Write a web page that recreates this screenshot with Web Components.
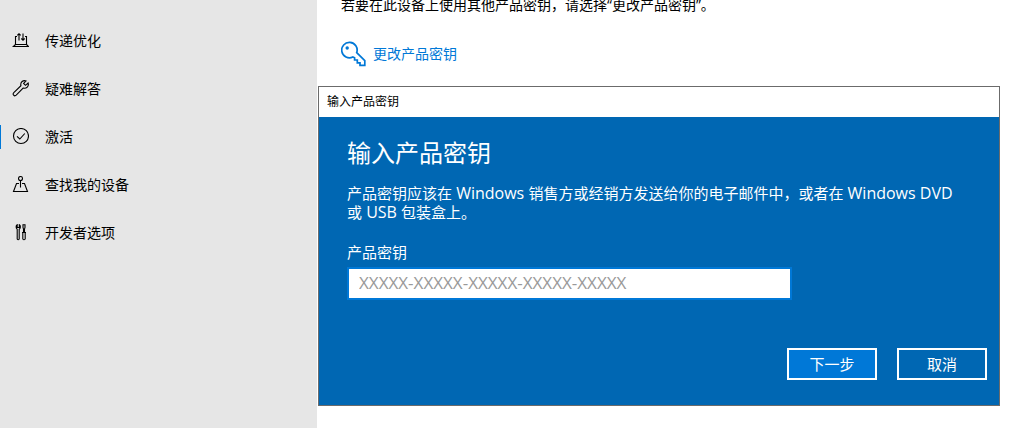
<!DOCTYPE html>
<html lang="zh-CN">
<head>
<meta charset="utf-8">
<title>激活</title>
<style>
body { margin: 0; background: #fff; color: #000; font-family: "Open Sans", "Noto Sans CJK SC", sans-serif; font-size: 14px; }
</style>
</head>
<body>
<settings-page></settings-page>
<script>
const define = (name, html, setup) => customElements.define(name, class extends HTMLElement {
  connectedCallback() {
    if (this.shadowRoot) return;
    const t = document.createElement('template');
    t.innerHTML = html;
    this.attachShadow({ mode: 'open' }).append(t.content.cloneNode(true));
    if (setup) setup(this, this.shadowRoot);
  }
});

define('nav-item', `
<style>
:host { display: block; }
a { display: flex; align-items: center; gap: 16px; height: 48px; padding-left: 12px; position: relative; color: #000; text-decoration: none; line-height: 20px; }
:host([current]) a::before { content: ""; position: absolute; left: 0; top: 12px; width: 1px; height: 24px; background: #0078d7; }
::slotted(svg) { width: 17px; height: 18px; flex: none; }
</style>
<a href="#"><slot name="icon"></slot><slot></slot></a>`,
(host, root) => { if (host.hasAttribute('current')) root.querySelector('a').setAttribute('aria-current', 'page'); });

define('side-nav', `
<style>
:host { display: block; background: #e6e6e6; }
nav { padding-top: 17px; }
svg { fill: none; stroke: #000; stroke-width: 1.1; }
</style>
<nav>
<nav-item><svg slot="icon" viewBox="0 0 17 18"><path d="M5 4.500H3.500V12.500H14.500V4.500H13M3.500 12.500L1.300 14.500H16.400L14.500 12.500M7 8.500V1.700M5.300 3.400L7 1.700L8.700 3.400M11 1.500V8.200M9.300 6.500L11 8.200L12.700 6.500"/></svg>传递优化</nav-item>
<nav-item><svg slot="icon" viewBox="0 0 17 18"><path d="M14 .9C11.200-.1 8.100 2 8.900 5.700L1.800 12.600C.1 14.400 2.300 16.900 4.200 15.200L11.100 8.100C14.500 8.900 17.200 6.200 16.100 3L13.500 5.300L11.600 3.400Z"/></svg>疑难解答</nav-item>
<nav-item current><svg slot="icon" viewBox="0 0 17 18"><circle cx="9" cy="8" r="7.500"/><path d="M5 8.300L7.800 11L12.800 5.500"/></svg>激活</nav-item>
<nav-item><svg slot="icon" viewBox="0 0 17 18"><circle cx="8.500" cy="2.500" r="2"/><path d="M8.500 4.500V11.500M7 7.500H4.500L1.500 15.500H15.500L12.500 7.500H10"/></svg>查找我的设备</nav-item>
<nav-item><svg slot="icon" viewBox="0 0 17 18"><path d="M5.200.7C3.700 1.700 3.800 4.300 5.200 5.200V15Q6.200 16.500 7.200 15V5.200C8.800 4.300 8.800 1.700 7.300.7V3.500H5.200ZM11 .7H13V3.500L12.500 5V8.500H11.500V5L11 3.500ZM10 8.500H14M10.800 8.500V15Q12 16.500 13.200 15V8.500"/></svg>开发者选项</nav-item>
</nav>`);

define('change-key-link', `
<style>
:host { display: block; }
a { display: inline-flex; align-items: center; gap: 7px; color: #0078d7; text-decoration: none; line-height: 24px; }
svg { width: 25px; height: 26px; fill: none; stroke: #0078d7; stroke-width: 1.700; }
</style>
<a href="#"><svg viewBox="0 0 25 26"><path d="M15.700 11.600L23.800 19.700V24.300H19V21.800H16.300V19H13.600V16.800L11.800 16A7.700 7.700 0 1 1 15.700 11.600Z"/><circle cx="6.200" cy="7" r="1.700" fill="#0078d7" stroke="none"/></svg><slot></slot></a>`);

define('dialog-button', `
<style>
:host { display: block; }
button { box-sizing: border-box; width: 90px; height: 32px; padding: 0; border: 2px solid #fff; border-radius: 0; background: transparent; color: #fff; font: inherit; font-size: 15px; line-height: 20px; }
:host([primary]) button { background: #0078d7; }
</style>
<button type="button"><slot></slot></button>`);

define('key-field', `
<style>
:host { display: block; }
label { display: block; line-height: 20px; margin-bottom: 5px; }
input { display: block; box-sizing: border-box; width: 100%; max-width: 445px; height: 33px; padding: 0 10px 2px; border: 2px solid #0078d7; border-radius: 0; outline: 0; background: #fff; color: #000; font: inherit; font-size: 17px; }
input::placeholder { color: #999; opacity: 1; }
</style>
<label for="key">产品密钥</label>
<input id="key" type="text" placeholder="XXXXX-XXXXX-XXXXX-XXXXX-XXXXX">`);

define('key-dialog', `
<style>
:host { display: block; border: 1px solid #6b6b6b; background: #fff; }
header { padding: 0 8px; font-size: 12px; line-height: 30px; }
section { padding: 20px 12px 25px 28px; background: #0067b3; color: #fff; font-size: 15px; }
h1 { margin: 0 0 15px; font-size: 24px; line-height: 32px; font-weight: 400; }
p { margin: 0 28px 20px 0; line-height: 19px; }
p span { font-size: 16px; }
footer { display: flex; justify-content: flex-end; gap: 20px; margin-top: 48px; }
</style>
<div role="dialog" aria-labelledby="title">
<header>输入产品密钥</header>
<section>
<h1 id="title">输入产品密钥</h1>
<p>产品密钥应该在<span lang="en"> Windows </span>销售方或经销方发送给你的电子邮件中，或者在<span lang="en"> Windows DVD </span>或<span lang="en"> USB </span>包装盒上。</p>
<key-field></key-field>
<footer><dialog-button primary>下一步</dialog-button><dialog-button>取消</dialog-button></footer>
</section>
</div>`);

define('settings-page', `
<style>
:host { display: grid; grid-template-columns: 317px 1fr; min-height: 100vh; }
main { padding-right: 24px; padding-left: 1px; }
.intro { padding-left: 23px; }
p { margin: 0 0 31px; line-height: 10px; }
key-dialog { margin-top: 15px; }
</style>
<side-nav></side-nav>
<main>
<div class="intro">
<p>若要在此设备上使用其他产品密钥，请选择“更改产品密钥”。</p>
<change-key-link>更改产品密钥</change-key-link>
</div>
<key-dialog></key-dialog>
</main>`);
</script>
</body>
</html>
